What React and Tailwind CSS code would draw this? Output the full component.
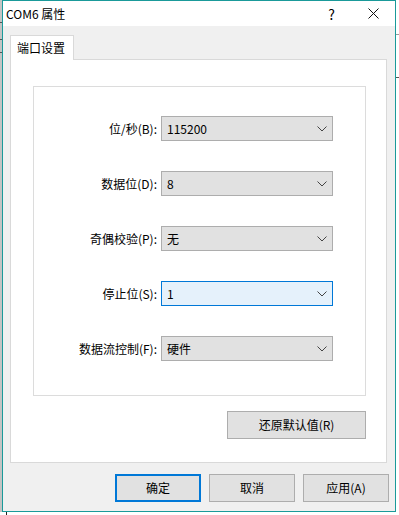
import React from 'react';

const font = { fontFamily: '"Noto Sans CJK SC", "Noto Sans", sans-serif' };

function Chevron() {
  return (
    <svg width="10" height="6" viewBox="0 0 10 6" className="shrink-0">
      <path d="M0.5 0.5 L5 5 L9.5 0.5" fill="none" stroke="#444" strokeWidth="1" />
    </svg>
  );
}

function ComboRow({ label, value, focused }) {
  return (
    <div className="flex items-center h-[25px]">
      <div className="w-[127px] text-right pr-[4px] text-[12px] text-black leading-none">{label}</div>
      <div
        className={
          focused
            ? 'flex items-center justify-between w-[172px] h-[25px] border border-[#0078d7] bg-[#e5f1fb] pl-[5px] pr-[5px]'
            : 'flex items-center justify-between w-[172px] h-[25px] border border-[#adadad] bg-[#e1e1e1] pl-[5px] pr-[5px]'
        }
      >
        <span className="text-[12px] text-black leading-none">{value}</span>
        <Chevron />
      </div>
    </div>
  );
}

function Btn({ children, primary, className = '' }) {
  return (
    <div
      className={
        (primary
          ? 'border-2 border-[#0078d7] '
          : 'border border-[#adadad] ') +
        'bg-[#e1e1e1] flex items-center justify-center text-[12px] text-black h-[28px] ' +
        className
      }
    >
      {children}
    </div>
  );
}

export default function App() {
  const rows = [
    { label: '位/秒(B):', value: '115200' },
    { label: '数据位(D):', value: '8' },
    { label: '奇偶校验(P):', value: '无' },
    { label: '停止位(S):', value: '1', focused: true },
    { label: '数据流控制(F):', value: '硬件' },
  ];

  return (
    <div className="w-[399px] h-[515px] bg-white flex flex-col overflow-hidden" style={font}>
      <div className="flex h-[512px]">
        {/* desktop strip behind, left */}
        <div className="w-[2px] h-full bg-[#c4c4c4] flex flex-col">
          <div className="h-[22px]" />
          <div className="h-[1px] bg-[#555]" />
          <div className="h-[16px]" />
          <div className="h-[1px] bg-[#555]" />
          <div className="h-[12px]" />
          <div className="h-[1px] bg-[#555]" />
        </div>

        {/* dialog window */}
        <div className="w-[394px] h-[512px] border border-[#1a9a9a] bg-[#f0f0f0] flex flex-col">
          {/* title bar */}
          <div className="h-[25px] bg-white flex items-center shrink-0">
            <span className="pl-[3px] text-[12px] text-black leading-none">COM6 属性</span>
            <span className="ml-auto mr-[33px] text-[14px] text-black leading-none">?</span>
            <svg width="11" height="11" viewBox="0 0 11 11" className="mr-[16px]">
              <path d="M0.5 0.5 L10.5 10.5 M10.5 0.5 L0.5 10.5" stroke="#111" strokeWidth="1" />
            </svg>
          </div>

          {/* content */}
          <div className="flex flex-col px-[7px] pt-[9px]">
            <div className="flex">
              <div className="relative z-10 -mb-px w-[64px] h-[25px] bg-white border border-b-0 border-[#d9d9d9] flex items-center pl-[6px] text-[12px] text-black">
                端口设置
              </div>
            </div>
            <div className="h-[404px] w-[377px] bg-white border border-[#d9d9d9] flex flex-col pl-[22px] pt-[26px]">
              <div className="w-[333px] h-[310px] border border-[#dcdcdc] flex flex-col gap-[30px] pt-[29px]">
                {rows.map((r) => (
                  <ComboRow key={r.label} {...r} />
                ))}
              </div>
              <div className="flex justify-end pr-[20px] mt-[15px]">
                <Btn className="w-[139px]">还原默认值(R)</Btn>
              </div>
            </div>
          </div>

          {/* bottom buttons */}
          <div className="flex justify-end gap-[8px] pr-[6px] mt-[11px]">
            <Btn primary className="w-[86px]">确定</Btn>
            <Btn className="w-[86px]">取消</Btn>
            <Btn className="w-[86px]">应用(A)</Btn>
          </div>
        </div>

        {/* desktop strip behind, right */}
        <div className="flex-1 h-full bg-white flex flex-col">
          <div className="h-[34px]" />
          <div className="h-[1px] bg-[#9a9a9a]" />
          <div className="h-[42px]" />
          <div className="h-[1px] bg-[#555]" />
        </div>
      </div>
      <div className="flex-1 bg-white flex">
        <div className="w-[6px]" />
        <div className="w-[1px] bg-[#222]" />
      </div>
    </div>
  );
}
